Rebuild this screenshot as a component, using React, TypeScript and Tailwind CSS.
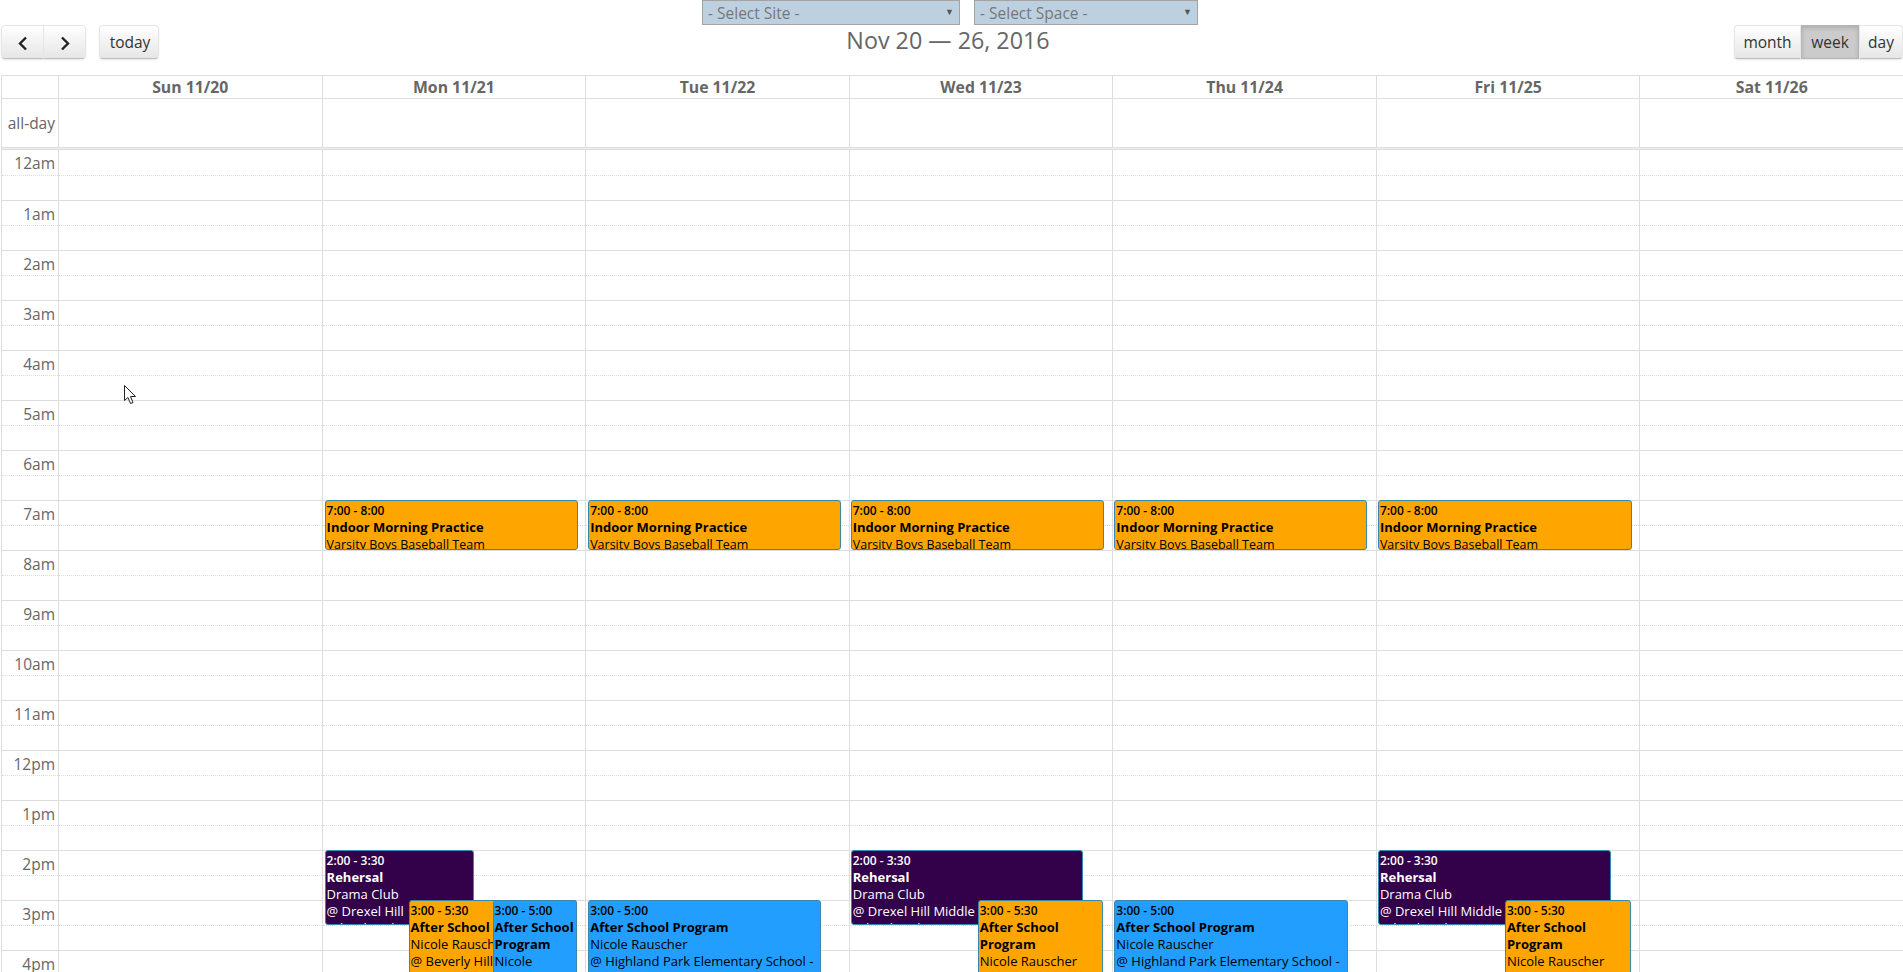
import React from "react";

const hours = ["12am","1am","2am","3am","4am","5am","6am","7am","8am","9am","10am","11am","12pm","1pm","2pm","3pm","4pm"];
const days = ["Sun 11/20","Mon 11/21","Tue 11/22","Wed 11/23","Thu 11/24","Fri 11/25","Sat 11/26"];

function Slots({ axis }: { axis?: boolean }) {
  return (
    <>
      {hours.map((h, i) => (
        <React.Fragment key={h}>
          <div className={`h-[25px] pr-[3px] text-right text-[15.5px] leading-[26px] text-[#666] ${i === 0 ? "" : "border-t border-[#ddd]"}`}>
            {axis ? h : null}
          </div>
          <div className="h-[25px] border-t border-dotted border-[#ddd]" />
        </React.Fragment>
      ))}
    </>
  );
}

type Ev = { cls: string; time: string; title: React.ReactNode; lines: React.ReactNode[] };

function Event({ cls, time, title, lines }: Ev) {
  return (
    <div className={`absolute overflow-hidden rounded-[3px] border border-[#3a87ad] pl-[1px] pt-[1px] text-[13px] leading-[17px] ${cls}`}>
      <div className="whitespace-nowrap text-[12px] font-semibold">{time}</div>
      <div className="font-bold">{title}</div>
      {lines.map((l, i) => (
        <div key={i}>{l}</div>
      ))}
    </div>
  );
}

const orangeCls = "bg-[#ffa500] text-black";
const blueCls = "bg-[#219eff] text-black";
const purpleCls = "bg-[#33004a] text-white";

function Morning({ pos }: { pos: string }) {
  return (
    <Event
      cls={`${pos} ${orangeCls}`}
      time="7:00 - 8:00"
      title="Indoor Morning Practice"
      lines={[<span className="text-[12.5px]">Varsity Boys Baseball Team</span>]}
    />
  );
}

function Rehearsal({ pos, at }: { pos: string; at: string }) {
  return (
    <Event
      cls={`${pos} ${purpleCls}`}
      time="2:00 - 3:30"
      title="Rehersal"
      lines={["Drama Club", at, "School Auditorium"]}
    />
  );
}

const dayEvents: React.ReactNode[] = [
  null,
  <>
    <Morning pos="left-[2px] w-[253px] top-[350px] h-[50px]" />
    <Rehearsal pos="left-[2px] w-[149px] top-[700px] h-[75px]" at="@ Drexel Hill" />
    <Event cls={`left-[86px] w-[168px] top-[750px] h-[125px] ${orangeCls}`} time="3:00 - 5:30" title="After School Program" lines={["Nicole Rauscher", "@ Beverly Hills Middle School"]} />
    <Event cls={`left-[170px] w-[84px] top-[750px] h-[100px] ${blueCls}`} time="3:00 - 5:00" title="After School Program" lines={["Nicole", "Rauscher"]} />
  </>,
  <>
    <Morning pos="left-[2px] w-[253px] top-[350px] h-[50px]" />
    <Event cls={`left-[2px] w-[233px] top-[750px] h-[100px] ${blueCls}`} time="3:00 - 5:00" title="After School Program" lines={["Nicole Rauscher", "@ Highland Park Elementary School -"]} />
  </>,
  <>
    <Morning pos="left-[1px] w-[253px] top-[350px] h-[50px]" />
    <Rehearsal pos="left-[1px] w-[232px] top-[700px] h-[75px]" at="@ Drexel Hill Middle" />
    <Event cls={`left-[128px] w-[125px] top-[750px] h-[125px] ${orangeCls}`} time="3:00 - 5:30" title="After School Program" lines={["Nicole Rauscher"]} />
  </>,
  <>
    <Morning pos="left-[1px] w-[253px] top-[350px] h-[50px]" />
    <Event cls={`left-[1px] w-[234px] top-[750px] h-[100px] ${blueCls}`} time="3:00 - 5:00" title="After School Program" lines={["Nicole Rauscher", "@ Highland Park Elementary School -"]} />
  </>,
  <>
    <Morning pos="left-[1px] w-[254px] top-[350px] h-[50px]" />
    <Rehearsal pos="left-[1px] w-[233px] top-[700px] h-[75px]" at="@ Drexel Hill Middle" />
    <Event cls={`left-[128px] w-[126px] top-[750px] h-[125px] ${orangeCls}`} time="3:00 - 5:30" title="After School Program" lines={["Nicole Rauscher"]} />
  </>,
  null,
];

const btn = "flex h-[34px] items-center justify-center border border-[#e6e6e6] border-b-[#bfbfbf] bg-gradient-to-b from-white to-[#e6e6e6] pt-[2px] text-[15.5px] text-[#333]";

function Chevron({ left }: { left?: boolean }) {
  return (
    <svg width="12" height="15" viewBox="0 0 12 15" fill="none" stroke="#222" strokeWidth="2.4">
      <polyline points={left ? "9,1.5 3,7.5 9,13.5" : "3,1.5 9,7.5 3,13.5"} />
    </svg>
  );
}

const selectBox = "flex h-[25px] items-start justify-between border border-[#a3a3a3] bg-[#bdd0e0] pl-[5px] pr-[5px] text-[15.5px] leading-[25px] text-[#777]";

export default function App() {
  return (
    <div className="relative h-[972px] w-[1903px] overflow-hidden bg-white pl-[1px] font-['Open_Sans',sans-serif] text-[#666]">
      <div className="relative flex h-[75px] justify-between">
        <div className="mt-[25px] flex items-start">
          <div className="flex h-[34px] w-[85px] overflow-hidden rounded-[4px] shadow-[0_1px_2px_rgba(0,0,0,0.1)]">
            <button className={`${btn} w-[43px] rounded-l-[4px]`}><Chevron left /></button>
            <button className={`${btn} w-[42px] rounded-r-[4px] border-l-0`}><Chevron /></button>
          </div>
          <button className={`${btn} ml-[13px] w-[60px] rounded-[4px] pl-[2px] shadow-[0_1px_2px_rgba(0,0,0,0.1)]`}>today</button>
        </div>
        <div className="absolute left-[701px] top-0 flex flex-col items-center">
          <div className="flex gap-[14px]">
            <div className={`${selectBox} w-[258px]`}>
              <span>- Select Site -</span><span className="text-[9px] leading-[21px] text-[#555]">▼</span>
            </div>
            <div className={`${selectBox} w-[224px]`}>
              <span>- Select Space -</span><span className="text-[9px] leading-[21px] text-[#555]">▼</span>
            </div>
          </div>
          <h2 className="ml-[-4px] text-[23.3px] font-medium leading-[30px] text-[#666]">Nov 20 — 26, 2016</h2>
        </div>
        <div className="mt-[25px] flex h-[34px] w-[169px] rounded-[4px] shadow-[0_1px_2px_rgba(0,0,0,0.1)]">
          <button className={`${btn} w-[67px] rounded-l-[4px]`}>month</button>
          <button className="flex h-[34px] w-[58px] items-center justify-center border border-[#b5b5b5] bg-[#cbcbcb] pt-[2px] text-[15.5px] text-[#333] shadow-[inset_0_2px_4px_rgba(0,0,0,0.15)]">week</button>
          <button className={`${btn} w-[44px] rounded-r-[4px]`}>day</button>
        </div>
      </div>

      <div className="border-l border-t border-[#ddd]">
        <div className="flex h-[23px] border-b border-[#ddd] text-[15.8px] font-bold leading-[22px] text-[#666]">
          <div className="w-[56px] shrink-0" />
          {days.map((d) => (
            <div key={d} className="flex-1 border-l border-[#ddd] text-center">{d}</div>
          ))}
        </div>
        <div className="flex h-[48px]">
          <div className="w-[56px] shrink-0 pr-[3px] text-right text-[15.5px] leading-[49px] text-[#666]">all-day</div>
          {days.map((d) => (
            <div key={d} className="flex-1 border-l border-[#ddd]" />
          ))}
        </div>
        <div className="h-[3px] border-y border-[#ddd] bg-[#eee]" />
        <div className="flex">
          <div className="w-[56px] shrink-0"><Slots axis /></div>
          {days.map((d, i) => (
            <div key={d} className="relative flex-1 border-l border-[#ddd]">
              <Slots />
              {dayEvents[i]}
            </div>
          ))}
        </div>
      </div>

      <svg className="absolute left-[124px] top-[385px]" width="14" height="20" viewBox="0 0 14 20">
        <path d="M0.5 0.5 L0.5 15.5 L4 12.5 L6.5 18.5 L9 17.5 L6.5 11.5 L11.5 11.5 Z" fill="#fff" stroke="#222" strokeWidth="1" />
      </svg>
    </div>
  );
}
